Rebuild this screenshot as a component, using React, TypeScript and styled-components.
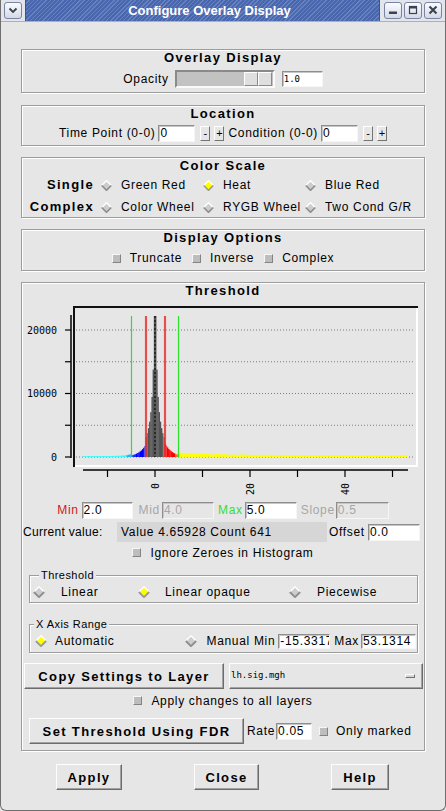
import React from "react";
import styled, { createGlobalStyle } from "styled-components";

const SANS = `"Liberation Sans", Arial, sans-serif`;
const MONO = `"DejaVu Sans Mono", "Liberation Mono", monospace`;
const BG = "#e6e6e6";

const GlobalStyle = createGlobalStyle`
  html, body { margin: 0; padding: 0; background: ${BG}; }
  body { font-family: ${SANS}; font-size: 12px; letter-spacing: 0.68px; color: #000; }
  * { box-sizing: border-box; }
`;

const Window = styled.div`
  width: 446px;
  height: 811px;
  display: flex;
  flex-direction: column;
  background: ${BG};
  border: 1px solid #6f6f6f;
  border-top: 0;
  border-radius: 0 0 6px 6px;
  overflow: hidden;
`;

/* ---------- title bar ---------- */

const TitleBar = styled.div`
  height: 22px;
  display: flex;
  background: #e2e5ec;
  border-bottom: 1px solid #a7afc1;
`;

const TitleSide = styled.div<{ $w: number }>`
  width: ${(p) => p.$w}px;
  display: flex;
  align-items: center;
  justify-content: center;
  gap: 2px;
`;

const TitleStripe = styled.div`
  flex: 1;
  display: flex;
  align-items: center;
  justify-content: center;
  padding-left: 14px;
  color: #fff;
  font: bold 13px ${SANS};
  letter-spacing: 0;
  background: repeating-linear-gradient(135deg, #4a67ad 0px, #4a67ad 2px, #6582c2 2px, #6582c2 3px);
  border-left: 1px solid #3b5490;
  border-right: 1px solid #3b5490;
`;

const WmButton = styled.div`
  width: 18px;
  height: 17px;
  border: 1px solid #7884a1;
  border-radius: 3px;
  background: linear-gradient(#fbfcfe, #d3d9e5);
  display: flex;
  align-items: center;
  justify-content: center;
`;

const WmIcon = ({ kind }: { kind: "menu" | "min" | "max" | "close" }) => (
  <svg width="12" height="11" viewBox="0 0 12 11">
    {kind === "menu" && <path d="M2.5 3.5 L6 7 L9.5 3.5" fill="none" stroke="#3a4252" strokeWidth="1.8" />}
    {kind === "min" && <rect x="2" y="6.5" width="8" height="2.5" fill="#3a4252" />}
    {kind === "max" && (
      <>
        <rect x="2.5" y="1.5" width="7" height="7" fill="none" stroke="#3a4252" strokeWidth="1.2" />
        <rect x="2" y="1" width="8" height="2.5" fill="#3a4252" />
      </>
    )}
    {kind === "close" && (
      <path d="M2.5 1.5 L9.5 8.5 M9.5 1.5 L2.5 8.5" stroke="#3a4252" strokeWidth="2.1" />
    )}
  </svg>
);

/* ---------- frames ---------- */

const Body = styled.div`
  display: flex;
  flex-direction: column;
  padding: 27px 20px 0;
`;

const Frame = styled.section<{ $mt?: number; $pb: number }>`
  margin-top: ${(p) => p.$mt ?? 0}px;
  padding-bottom: ${(p) => p.$pb}px;
  border: 1px solid #9d9d9d;
  box-shadow: inset 1px 1px 0 #fff, 1px 1px 0 #fff;
  display: flex;
  flex-direction: column;
`;

const FrameTitle = styled.h2`
  margin: 0;
  height: 18px;
  line-height: 18px;
  text-align: center;
  font: bold 13px ${SANS};
  letter-spacing: 1.35px;
`;

const Row = styled.div<{ $h: number; $mt?: number; $justify?: string }>`
  display: flex;
  align-items: center;
  height: ${(p) => p.$h}px;
  margin-top: ${(p) => p.$mt ?? 0}px;
  justify-content: ${(p) => p.$justify ?? "center"};
  white-space: nowrap;
`;

const Label = styled.span<{ $color?: string; $ml?: number; $w?: number; $ls?: number }>`
  color: ${(p) => p.$color ?? "#000"};
  margin-left: ${(p) => p.$ml ?? 0}px;
  ${(p) => (p.$w ? `width: ${p.$w}px; flex: none;` : "")}
  ${(p) => (p.$ls !== undefined ? `letter-spacing: ${p.$ls}px;` : "")}
  white-space: nowrap;
`;

const BoldLabel = styled.span`
  font: bold 13px ${SANS};
  letter-spacing: 1.35px;
  text-align: right;
  padding-right: 2px;
  line-height: 18px;
`;

const Entry = styled.input<{ $w: number; $h?: number; $ml?: number; $off?: boolean; $mono?: boolean }>`
  width: ${(p) => p.$w}px;
  height: ${(p) => p.$h ?? 17}px;
  margin: 0 0 0 ${(p) => p.$ml ?? 0}px;
  padding: 0 0 0 1px;
  border-style: solid;
  border-width: 1px;
  border-color: #8e8e8e #f6f6f6 #f6f6f6 #8e8e8e;
  box-shadow: inset 1px 1px 0 #c6c6c6;
  background: ${(p) => (p.$off ? BG : "#fff")};
  color: ${(p) => (p.$off ? "#a6a6a6" : "#000")};
  font: ${(p) => (p.$mono ? `9px ${MONO}` : `12px ${SANS}`)};
  letter-spacing: ${(p) => (p.$mono ? 0 : 0.68)}px;
  outline: none;
  flex: none;
`;

/* slider */
const Trough = styled.div`
  width: 100px;
  height: 18px;
  margin-left: 6px;
  display: flex;
  justify-content: flex-end;
  align-items: center;
  padding-right: 1px;
  background: #c2c2c2;
  border: 2px solid;
  border-color: #8a8a8a #fafafa #fafafa #8a8a8a;
`;

const ThumbHalf = styled.div`
  width: 14px;
  height: 14px;
  background: #dfdfdf;
  border: 1px solid;
  border-color: #fff #8a8a8a #8a8a8a #fff;
`;

const SpinBtn = styled.span<{ $ml: number }>`
  width: 10px;
  height: 15px;
  margin-left: ${(p) => p.$ml}px;
  background: ${BG};
  border: 1px solid;
  border-color: #fff #747474 #747474 #fff;
  font: 11px ${SANS};
  letter-spacing: 0;
  display: flex;
  align-items: center;
  justify-content: center;
  flex: none;
`;

/* radio and check indicators */
const Diamond = ({ on, size = 11 }: { on?: boolean; size?: number }) => (
  <svg width={size} height={size} viewBox="0 0 12 12" style={{ flex: "none" }}>
    <polygon points="6,0.8 11.2,6 6,11.2 0.8,6" fill={on ? "#ffff00" : "#cdcdcd"} />
    <polyline points="0.8,6 6,0.8 11.2,6" fill="none" stroke="#fff" strokeWidth="1.4" />
    <polyline points="0.8,6 6,11.2 11.2,6" fill="none" stroke={on ? "#9a9a9a" : "#8e8e8e"} strokeWidth="1.8" />
  </svg>
);

const CheckBox = styled.span`
  width: 9px;
  height: 9px;
  flex: none;
  background: #bdbdbd;
  border: 1px solid;
  border-color: #f7f7f7 #838383 #838383 #f7f7f7;
`;

const Option = styled.label<{ $gap: number; $ml?: number; $pl?: number; $push?: boolean }>`
  display: flex;
  align-items: center;
  gap: ${(p) => p.$gap}px;
  margin-left: ${(p) => (p.$push ? "auto" : `${p.$ml ?? 0}px`)};
  padding-left: ${(p) => p.$pl ?? 0}px;
  white-space: nowrap;
`;

const ScaleGrid = styled.div`
  display: grid;
  grid-template-columns: 74px 102px 102px 1fr;
  grid-auto-rows: 18px;
  row-gap: 4px;
  align-items: center;
`;

/* threshold parts */
const ValueBox = styled.div`
  width: 210px;
  height: 20px;
  line-height: 20px;
  padding-left: 4px;
  background: #d6d6d6;
  white-space: nowrap;
`;

const Group = styled.div<{ $mt: number; $h: number; $pt: number }>`
  position: relative;
  margin: ${(p) => p.$mt}px 6px 0 7px;
  height: ${(p) => p.$h}px;
  padding-top: ${(p) => p.$pt}px;
  border: 1px solid #9d9d9d;
  box-shadow: inset 1px 1px 0 #fff, 1px 1px 0 #fff;
`;

const Legend = styled.span<{ $left: number }>`
  position: absolute;
  top: -7px;
  left: ${(p) => p.$left}px;
  padding: 0 2px;
  background: ${BG};
  font: 11px ${SANS};
  letter-spacing: 0.45px;
  line-height: 12px;
`;

const RadioGrid = styled.div`
  display: grid;
  grid-template-columns: 105px 151px 1fr;
  padding-left: 3px;
  height: 18px;
  align-items: center;
`;

const AxisRow = styled.div`
  display: flex;
  align-items: center;
  height: 20px;
  padding: 0 1px 0 5px;
  white-space: nowrap;
`;

const Push = styled.button<{ $w: number; $ml?: number }>`
  width: ${(p) => p.$w}px;
  height: 26px;
  margin: 0 0 0 ${(p) => p.$ml ?? 0}px;
  padding: 0;
  flex: none;
  background: ${BG};
  border: 1px solid;
  border-color: #fdfdfd #6c6c6c #6c6c6c #fdfdfd;
  box-shadow: inset -1px -1px 0 #a2a2a2;
  font: bold 13px ${SANS};
  letter-spacing: 1.35px;
  color: #000;
`;

const MenuButton = styled.div`
  width: 194px;
  height: 26px;
  margin-left: 5px;
  display: flex;
  align-items: center;
  justify-content: space-between;
  padding: 0 7px 2px 1px;
  background: ${BG};
  border: 1px solid;
  border-color: #fdfdfd #6c6c6c #6c6c6c #fdfdfd;
  box-shadow: inset -1px -1px 0 #a2a2a2;
  font: 9px ${MONO};
  letter-spacing: 0;
`;

const MenuIndicator = styled.span`
  width: 10px;
  height: 4px;
  margin-top: 2px;
  background: #d4d4d4;
  border: 1px solid;
  border-color: #fff #727272 #727272 #fff;
`;

const ButtonBar = styled.div`
  display: flex;
  justify-content: space-between;
  margin-top: 13px;
  padding: 0 56px 0 55px;
`;

const ChartSvg = styled.svg`
  display: block;
  flex: none;
  letter-spacing: 0;
  font-family: ${MONO};
`;

/* ---------- histogram ---------- */

const X0 = 155;
const PX = 4.75;
const BASE = 457;
const xv = (v: number) => X0 + PX * v;

function barHeight(v: number, i: number) {
  const a = Math.max(0, Math.abs(v) - 0.125);
  if (v > 5) return 1.0 + 2.6 * Math.exp(-(v - 5) / 9) + 0.9 * Math.abs(Math.sin(i * 1.7));
  if (v < -5) return 0.7 + 2.0 * Math.exp((v + 5) / 1.4) + 0.3 * Math.abs(Math.sin(i * 2.1));
  let h = 141 * (0.55 * Math.exp(-a / 0.3) + 0.45 * Math.exp(-a / 1.5));
  if (v > 2) h *= 0.8;
  if (v < -2) h *= 0.65;
  return h;
}

function barColor(v: number) {
  if (v < -6) return "#33ffff";
  if (v < -5) return "#22b4ff";
  if (v < -2) return v < -4 ? "#1a2cff" : "#0000ff";
  if (v < 2) return "#545454";
  if (v < 5) return v > 4.2 ? "#ff6a00" : "#ff0000";
  return "#ffff00";
}

const STEP = 0.25;
const bars: { x: number; w: number; h: number; c: string }[] = [];
for (let i = -61; i <= 211; i++) {
  const v0 = i * STEP;
  const vc = v0 + STEP / 2;
  bars.push({ x: xv(v0), w: PX * STEP + 0.25, h: barHeight(vc, i), c: barColor(vc) });
}

const yTicks = [330, 361.75, 393.5, 425.25, 457];
const xTicks = [-10, 0, 10, 20, 30, 40, 50];

const Histogram = () => (
  <ChartSvg width="402" height="200" viewBox="22 301 402 200">
    {/* plot area relief: dark top/left, light bottom/right */}
    <rect x="73" y="306" width="345" height="2" fill="#111" />
    <rect x="73" y="306" width="2" height="161" fill="#111" />
    <rect x="75" y="465" width="343" height="2" fill="#fff" />
    <rect x="416" y="308" width="2" height="157" fill="#fff" />

    {yTicks.map((y) => (
      <line key={y} x1="76" y1={y} x2="415" y2={y} stroke="#7d7d7d" strokeDasharray="1 2" />
    ))}

    {bars.map((b, i) => (
      <rect key={i} x={b.x} y={BASE - b.h} width={b.w} height={b.h} fill={b.c} />
    ))}

    {/* threshold markers */}
    <line x1="131.5" y1="316" x2="131.5" y2="457" stroke="#2ee02e" strokeWidth="1.2" />
    <line x1="178.5" y1="316" x2="178.5" y2="457" stroke="#2ee02e" strokeWidth="1.2" />
    <rect x="144.5" y="316" width="3" height="141" fill="#ffb4b4" opacity="0.6" />
    <rect x="163.5" y="316" width="3" height="141" fill="#ffb4b4" opacity="0.6" />
    <line x1="146" y1="316" x2="146" y2="457" stroke="#d40000" strokeWidth="1.2" />
    <line x1="165" y1="316" x2="165" y2="457" stroke="#d40000" strokeWidth="1.2" />
    <line x1="155" y1="316" x2="155" y2="457" stroke="#000" strokeWidth="1" strokeDasharray="2 2" />

    {/* y axis */}
    <line x1="71" y1="315" x2="71" y2="458" stroke="#000" strokeWidth="1.5" />
    {yTicks.map((y) => (
      <line key={y} x1="65" y1={y} x2="71" y2={y} stroke="#000" strokeWidth="1.2" />
    ))}
    <text x="57" y="333.5" fontSize="10" textAnchor="end">20000</text>
    <text x="57" y="397" fontSize="10" textAnchor="end">10000</text>
    <text x="57" y="460.5" fontSize="10" textAnchor="end">0</text>

    {/* x axis */}
    <line x1="83" y1="470" x2="408" y2="470" stroke="#000" strokeWidth="1.5" />
    {xTicks.map((v) => (
      <line key={v} x1={xv(v)} y1="470" x2={xv(v)} y2="477" stroke="#000" strokeWidth="1.2" />
    ))}
    {[0, 20, 40].map((v) => (
      <text
        key={v}
        x={xv(v) + 3.5}
        y="483"
        fontSize="10"
        textAnchor="end"
        transform={`rotate(-90 ${xv(v) + 3.5} 483)`}
      >
        {v}
      </text>
    ))}
  </ChartSvg>
);

/* ---------- page ---------- */

export default function App() {
  return (
    <>
      <GlobalStyle />
      <Window>
        <TitleBar>
          <TitleSide $w={24}>
            <WmButton>
              <WmIcon kind="menu" />
            </WmButton>
          </TitleSide>
          <TitleStripe>Configure Overlay Display</TitleStripe>
          <TitleSide $w={65}>
            <WmButton>
              <WmIcon kind="min" />
            </WmButton>
            <WmButton>
              <WmIcon kind="max" />
            </WmButton>
            <WmButton>
              <WmIcon kind="close" />
            </WmButton>
          </TitleSide>
        </TitleBar>

        <Body>
          <Frame $pb={2}>
            <FrameTitle>Overlay Display</FrameTitle>
            <Row $h={22}>
              <Label>Opacity</Label>
              <Trough>
                <ThumbHalf />
                <ThumbHalf />
              </Trough>
              <Entry $w={41} $h={16} $ml={7} $mono value="1.0" readOnly />
            </Row>
          </Frame>

          <Frame $mt={12} $pb={3}>
            <FrameTitle>Location</FrameTitle>
            <Row $h={18}>
              <Label>Time Point (0-0)</Label>
              <Entry $w={37} $ml={3} value="0" readOnly />
              <SpinBtn $ml={5}>-</SpinBtn>
              <SpinBtn $ml={4}>+</SpinBtn>
              <Label $ml={4}>Condition (0-0)</Label>
              <Entry $w={37} $ml={3} value="0" readOnly />
              <SpinBtn $ml={5}>-</SpinBtn>
              <SpinBtn $ml={4}>+</SpinBtn>
            </Row>
          </Frame>

          <Frame $mt={11} $pb={1}>
            <FrameTitle>Color Scale</FrameTitle>
            <ScaleGrid>
              <BoldLabel>Single</BoldLabel>
              <Option $gap={9} $pl={5}>
                <Diamond />
                Green Red
              </Option>
              <Option $gap={9} $pl={5}>
                <Diamond on />
                Heat
              </Option>
              <Option $gap={9} $pl={5}>
                <Diamond />
                Blue Red
              </Option>
              <BoldLabel>Complex</BoldLabel>
              <Option $gap={9} $pl={5}>
                <Diamond />
                Color Wheel
              </Option>
              <Option $gap={9} $pl={5}>
                <Diamond />
                RYGB Wheel
              </Option>
              <Option $gap={9} $pl={5}>
                <Diamond />
                Two Cond G/R
              </Option>
            </ScaleGrid>
          </Frame>

          <Frame $mt={11} $pb={2}>
            <FrameTitle>Display Options</FrameTitle>
            <Row $h={20}>
              <Option $gap={9}>
                <CheckBox />
                Truncate
              </Option>
              <Option $gap={9} $ml={10}>
                <CheckBox />
                Inverse
              </Option>
              <Option $gap={9} $ml={10}>
                <CheckBox />
                Complex
              </Option>
            </Row>
          </Frame>

          <Frame $mt={11} $pb={6}>
            <FrameTitle>Threshold</FrameTitle>
            <Histogram />

            <Row $h={18}>
              <Label $color="#cf2020">Min</Label>
              <Entry $w={51} $ml={3} value="2.0" readOnly />
              <Label $color="#a6a6a6" $ml={6}>Mid</Label>
              <Entry $w={52} $ml={2} $off value="4.0" readOnly />
              <Label $color="#35dc35" $ml={4}>Max</Label>
              <Entry $w={52} $ml={2} value="5.0" readOnly />
              <Label $color="#a6a6a6" $ml={4}>Slope</Label>
              <Entry $w={53} $ml={1} $off value="0.5" readOnly />
            </Row>

            <Row $h={22} $mt={2} $justify="flex-start">
              <Label $ml={1} $w={94} $ls={0.3}>
                Current value:
              </Label>
              <ValueBox>Value 4.65928 Count 641</ValueBox>
              <Label $ml={2}>Offset</Label>
              <Entry $w={52} $ml={3} value="0.0" readOnly />
            </Row>

            <Row $h={19}>
              <Option $gap={9}>
                <CheckBox />
                Ignore Zeroes in Histogram
              </Option>
            </Row>

            <Group $mt={13} $h={28} $pt={7}>
              <Legend $left={9}>Threshold</Legend>
              <RadioGrid>
                <Option $gap={16}>
                  <Diamond size={12} />
                  Linear
                </Option>
                <Option $gap={15}>
                  <Diamond size={12} on />
                  Linear opaque
                </Option>
                <Option $gap={16}>
                  <Diamond size={12} />
                  Piecewise
                </Option>
              </RadioGrid>
            </Group>

            <Group $mt={21} $h={29} $pt={6}>
              <Legend $left={4}>X Axis Range</Legend>
              <AxisRow>
                <Option $gap={8}>
                  <Diamond size={12} on />
                  Automatic
                </Option>
                <Option $gap={9} $push>
                  <Diamond size={12} />
                  Manual Min
                </Option>
                <Entry $w={52} $h={15} $ml={3} value="-15.3317" readOnly />
                <Label $ml={4}>Max</Label>
                <Entry $w={55} $h={15} $ml={2} value="53.1314" readOnly />
              </AxisRow>
            </Group>

            <Row $h={26} $mt={10} $justify="flex-start">
              <Push $w={200} $ml={2}>Copy Settings to Layer</Push>
              <MenuButton>
                <span>lh.sig.mgh</span>
                <MenuIndicator />
              </MenuButton>
            </Row>

            <Row $h={19} $mt={2}>
              <Option $gap={9}>
                <CheckBox />
                Apply changes to all layers
              </Option>
            </Row>

            <Row $h={26} $mt={8} $justify="flex-start">
              <Push $w={215} $ml={7}>Set Threshold Using FDR</Push>
              <Label $ml={3}>Rate</Label>
              <Entry $w={36} $ml={1} value="0.05" readOnly />
              <Option $gap={8} $ml={7}>
                <CheckBox />
                Only marked
              </Option>
            </Row>
          </Frame>
        </Body>

        <ButtonBar>
          <Push $w={66}>Apply</Push>
          <Push $w={65}>Close</Push>
          <Push $w={58}>Help</Push>
        </ButtonBar>
      </Window>
    </>
  );
}
